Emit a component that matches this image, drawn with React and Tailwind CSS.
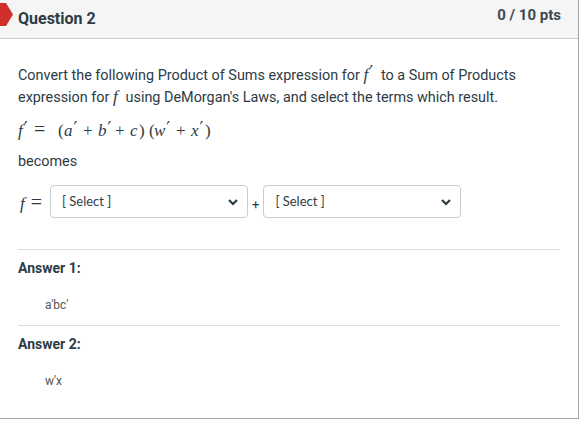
import React from "react";

const body = { fontFamily: "Roboto, 'Noto Sans', sans-serif" };
const mathFont = { fontFamily: "'Liberation Serif', 'DejaVu Serif', serif" };

function Marker() {
  return (
    <svg width="14" height="26" viewBox="0 0 14 26" className="absolute left-0 top-[2px]">
      <path d="M0 1 L6 1 L13 12.5 L6 24 L0 24 Z" fill="#d22e2a" />
    </svg>
  );
}

function Select() {
  return (
    <div className="h-[33px] w-[198px] rounded-[4px] border border-[#c7cdd1] bg-white flex items-center justify-between pl-[11px] pr-[8px] text-[13px] text-[#2d3b45]"
      style={{ fontFamily: "Lato, 'Noto Sans', sans-serif" }}>
      <span>[ Select ]</span>
      <svg width="12" height="12" viewBox="0 0 12 12">
        <path d="M2 4 L6 8 L10 4" fill="none" stroke="#2d3b45" strokeWidth="2.2" />
      </svg>
    </div>
  );
}

const Prime = () => (
  <span className="inline-block relative -top-[2px] ml-[1px] text-[17px] leading-[10px] not-italic" style={{ fontFamily: "'DejaVu Sans', sans-serif" }}>′</span>
);

// italic variable, optionally primed
const V = ({ c, p, w }) => (
  <span className={`inline-block ${w}`}>
    <i>{c}</i>{p && <Prime />}
  </span>
);
const Op = ({ c, cls }) => <span className={`inline-block ${cls}`}>{c}</span>;

export default function App() {
  return (
    <div className="w-[579px] h-[419px] bg-white border-r border-b border-[#a5a5a5] text-[#2d3b45]" style={body}>
      {/* header */}
      <div className="relative h-[39px] bg-[#f5f5f5] border-b border-[#c7cdd1] flex justify-between pl-[18px] pr-[17px]">
        <Marker />
        <div className="pt-[7px] text-[16px] font-bold">Question 2</div>
        <div className="pt-[4px] text-[15px] font-bold text-[#3d4a53]">0 / 10 pts</div>
      </div>

      <div className="px-[18px]">
        <p className="pt-[26px] text-[14.4px] leading-[22px]">
          Convert the following Product of Sums expression for{" "}
          <span className="inline-block w-[14px] text-[17px] leading-[16px]" style={mathFont}><i>f</i><Prime /></span>{" "}
          to a Sum of Products
          expression for <span className="inline-block w-[9px] text-[17px] leading-[16px]" style={mathFont}><i>f</i></span> using DeMorgan's Laws, and select the terms which result.
        </p>
        <div className="mt-[10px] text-[17px] leading-[22px] whitespace-nowrap" style={mathFont}>
          <V c="f" p w="w-[13px]" />
          <Op c="=" cls="text-[20px] leading-[20px] mx-[3px] w-[12px]" />
          <Op c="(" cls="ml-[9px] w-[6px]" />
          <V c="a" p w="w-[14px]" />
          <Op c="+" cls="mx-[5px] w-[10px]" />
          <V c="b" p w="w-[12px]" />
          <Op c="+" cls="mx-[5px] w-[10px]" />
          <V c="c" w="w-[9px]" />
          <Op c=")" cls="w-[6px]" />
          <Op c="(" cls="ml-[4px] w-[5px]" />
          <V c="w" p w="w-[17px]" />
          <Op c="+" cls="mx-[5px] w-[10px]" />
          <V c="x" p w="w-[14px]" />
          <Op c=")" cls="w-[6px]" />
        </div>
        <p className="mt-[9px] text-[14.4px] leading-[22px]">becomes</p>

        <div className="mt-[12px] flex items-center">
          <span className="text-[17px] w-[32px] whitespace-nowrap" style={mathFont}>
            <i className="ml-[2px] mr-[6px]">f</i><span className="text-[20px]">=</span>
          </span>
          <Select />
          <span className="text-[13px] mx-[4px] mt-[6px]">+</span>
          <Select />
        </div>

        <div className="mt-[31px] border-t border-[#dcdcdc]">
          <div className="pt-[10px] text-[14px] font-bold leading-[16px]">Answer 1:</div>
          <div className="pt-[21px] pl-[27px] text-[12px] text-[#555] leading-[16px]">a'bc'</div>
        </div>
        <div className="mt-[12px] border-t border-[#dcdcdc]">
          <div className="pt-[10px] text-[14px] font-bold leading-[16px]">Answer 2:</div>
          <div className="pt-[21px] pl-[27px] text-[12px] text-[#555] leading-[16px]">w'x</div>
        </div>
      </div>
    </div>
  );
}
